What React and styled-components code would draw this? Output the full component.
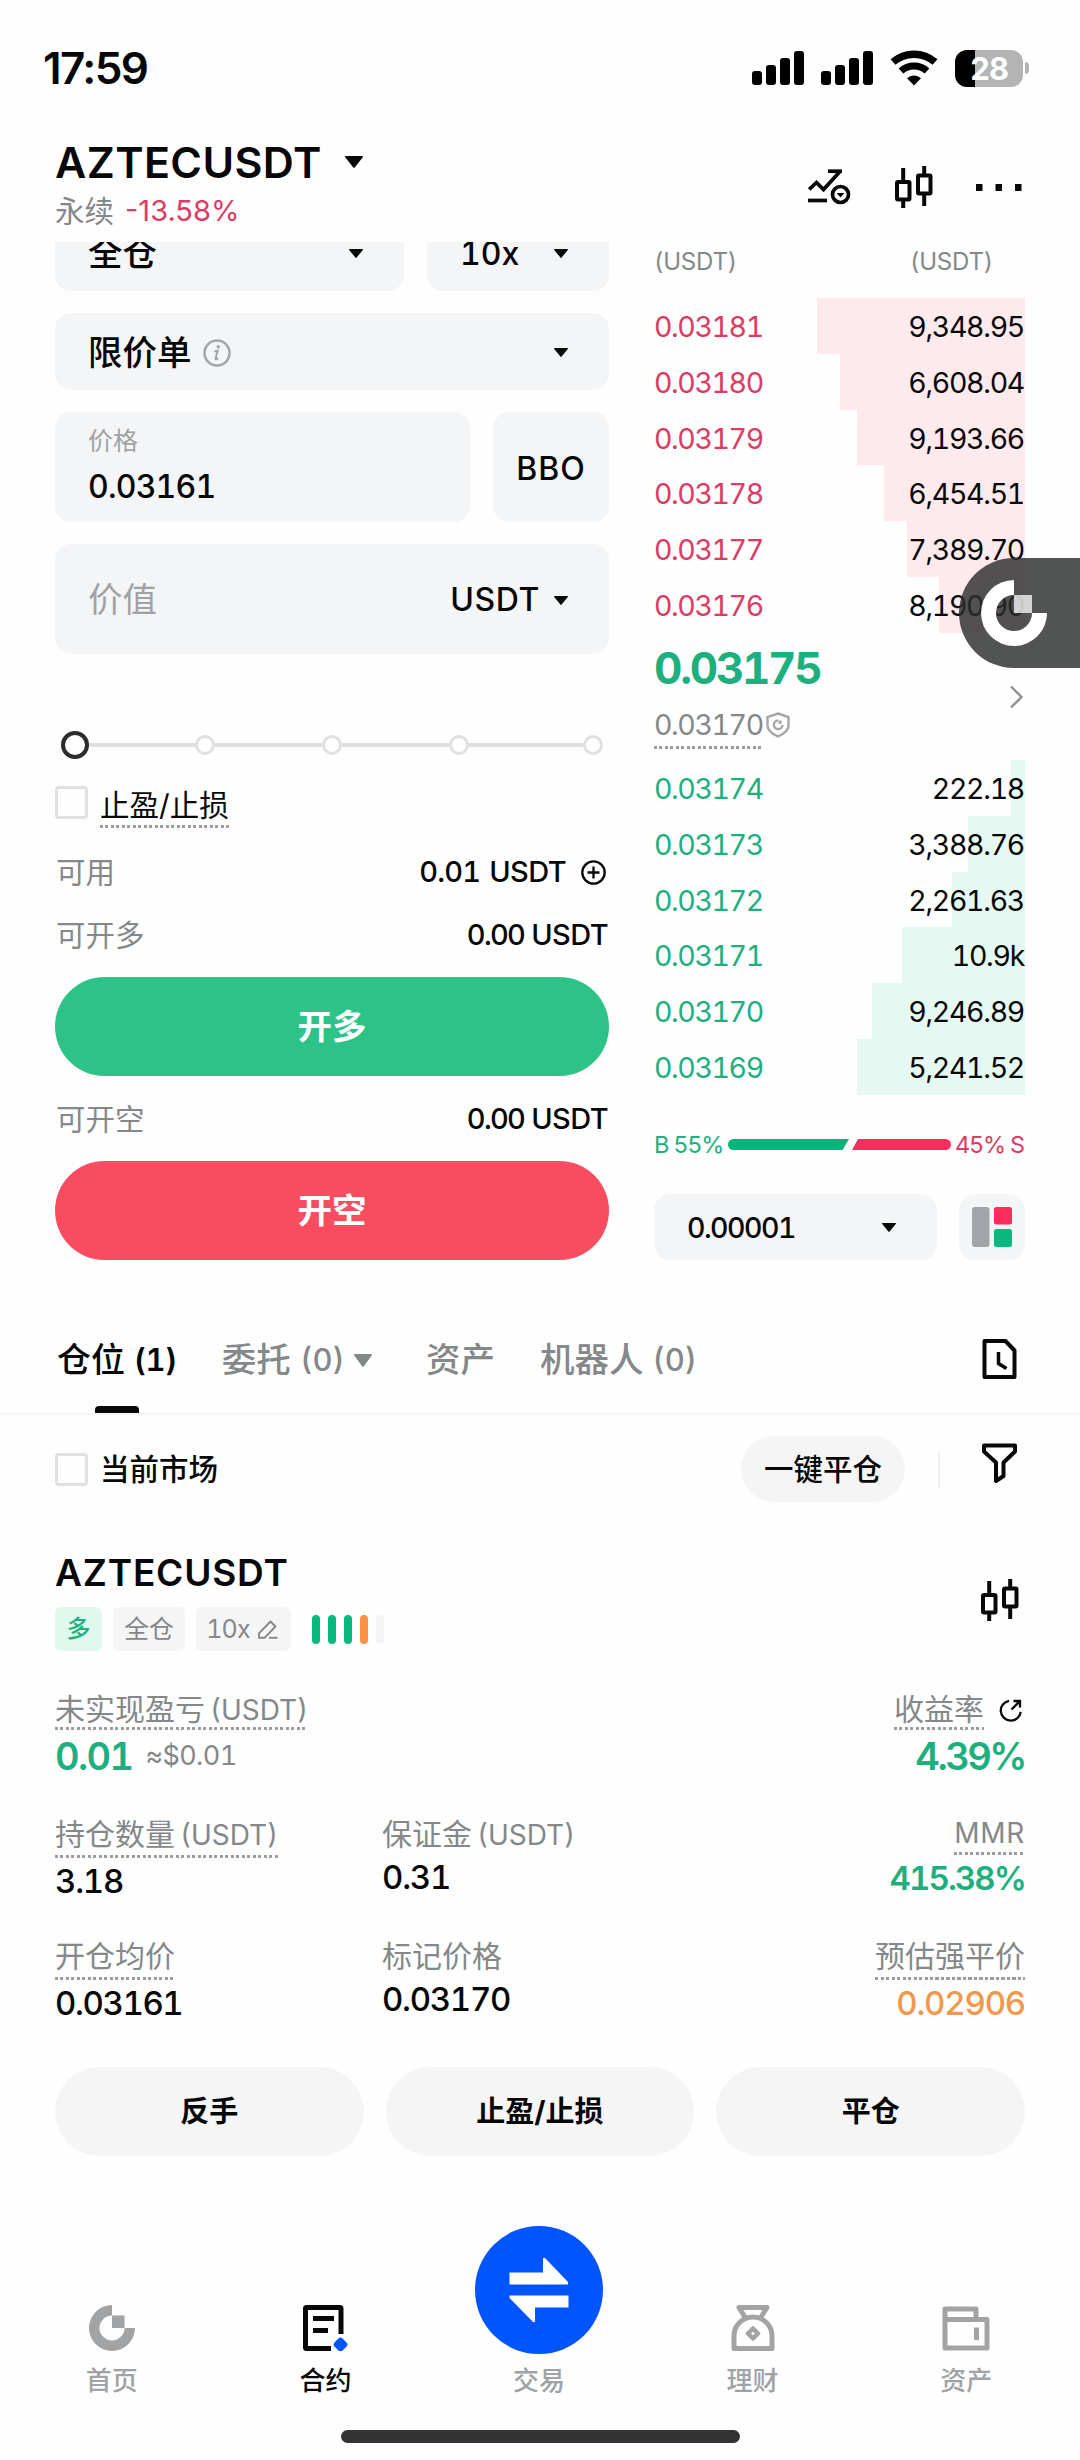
import React from "react";
import styled, { createGlobalStyle } from "styled-components";

const GlobalStyle = createGlobalStyle`
  * {
    box-sizing: border-box;
  }

  body {
    margin: 0;
    background-color: #fefefe;
    color: #070808;
    font-family: Inter, "Noto Sans CJK SC", sans-serif;
    font-variant-numeric: tabular-nums;
  }

  svg {
    display: block;
    flex-shrink: 0;
  }
`;

const Screen = styled.div`
  position: relative;
  width: 1080px;
  height: 2460px;
  overflow: hidden;
  display: flex;
  flex-direction: column;
`;

const Text = styled.span`
  font-size: ${(p) => p.$size || 29}px;
  font-weight: ${(p) => p.$weight || 400};
  font-variant-numeric: ${(p) => (p.$narrow ? "proportional-nums" : "tabular-nums")};
  letter-spacing: ${(p) => p.$spacing || 0}px;
  color: ${(p) => p.$color || "#070808"};
  line-height: ${(p) => p.$line || 40}px;
  white-space: nowrap;
`;

/* ---------- status bar ---------- */

const StatusBar = styled.div`
  height: 136px;
  padding: 0 51px 0 43px;
  display: flex;
  align-items: center;
  justify-content: space-between;
`;

const StatusIcons = styled.div`
  display: flex;
  align-items: center;
`;

const Signal = styled.div`
  display: flex;
  align-items: flex-end;
  gap: 4px;
  margin-right: 17px;

  i {
    width: 10px;
    border-radius: 3px;
    background-color: #000;
  }
  i:nth-child(1) { height: 14px; }
  i:nth-child(2) { height: 20px; }
  i:nth-child(3) { height: 27px; }
  i:nth-child(4) { height: 34px; }
`;

const Battery = styled.div`
  width: 68px;
  height: 37px;
  margin: 0 2px 0 17px;
  border-radius: 12px;
  background: linear-gradient(to right, #000 20px, #b4b4b4 20px);
  display: flex;
  align-items: center;
  justify-content: center;
  color: #fff;
  font-size: 31px;
  font-weight: 700;
  line-height: 37px;
  letter-spacing: -1px;
`;

const BatteryTip = styled.div`
  width: 4px;
  height: 12px;
  border-radius: 0 4px 4px 0;
  background-color: #b4b4b4;
`;

/* ---------- header ---------- */

const Header = styled.div`
  height: 106px;
  padding: 0 58px 0 55px;
  display: flex;
  justify-content: space-between;
`;

const Symbol = styled.div`
  display: flex;
  align-items: center;
  gap: 23px;
  height: 52px;
`;

const Change = styled.div`
  display: flex;
  align-items: center;
  gap: 11px;
  height: 46px;
`;

const HeaderIcons = styled.div`
  height: 102px;
  display: flex;
  align-items: center;
  gap: 43.5px;
`;

/* ---------- trade area ---------- */

const Trade = styled.div`
  height: 1018px;
  padding: 0 55px;
  overflow: hidden;
  display: flex;
  justify-content: space-between;
`;

// scrolled a little, so its first row goes under the header
const Form = styled.div`
  width: 554px;
  margin-top: -28px;
  display: flex;
  flex-direction: column;
`;

const FieldRow = styled.div`
  display: flex;
  gap: 23px;
  margin-bottom: 22px;
`;

const Field = styled.div`
  width: ${(p) => p.$width || "100%"};
  height: ${(p) => p.$height || 77}px;
  padding: 2px 41px 0 33px;
  border-radius: 16px;
  background-color: #f4f5f7;
  display: flex;
  align-items: center;
  justify-content: space-between;
`;

const PriceField = styled(Field)`
  flex-direction: column;
  align-items: flex-start;
  justify-content: flex-start;
  padding-top: 9px;
  gap: 6px;
`;

const BboButton = styled(Field)`
  padding: 3px 0 0;
  justify-content: center;
`;

const Inline = styled.div`
  display: flex;
  align-items: center;
  gap: ${(p) => p.$gap}px;
`;

const Slider = styled.div`
  height: 28px;
  margin: 55px 6px 0;
  display: flex;
  align-items: center;
`;

const Handle = styled.div`
  width: 28px;
  height: 28px;
  border: 4px solid #2b2c2d;
  border-radius: 50%;
`;

const Track = styled.div`
  width: ${(p) => p.$width}px;
  height: 4px;
  background-color: #dfdfdf;
`;

const Stop = styled.div`
  width: 20px;
  height: 20px;
  border: 3px solid #e0e0e0;
  border-radius: 50%;
`;

const CheckRow = styled.div`
  display: flex;
  gap: 12px;
  margin-top: 25px;
`;

const Checkbox = styled.div`
  width: 33px;
  height: 33px;
  margin-top: ${(p) => p.$offset || 0}px;
  border: 3px solid #dfe0e0;
  border-radius: 4px;
`;

const Underlined = styled.div`
  display: flex;
  align-items: baseline;
  gap: 5px;
  padding-bottom: ${(p) => (p.$tight ? 2 : 4)}px;
  background: repeating-linear-gradient(to right, #9b9d9f 0 3px, transparent 3px 5.5px) bottom / 100% 3px no-repeat;
`;

const InfoRow = styled.div`
  height: 40px;
  margin-top: ${(p) => p.$top}px;
  padding: 0 ${(p) => p.$right || 1}px 0 1px;
  display: flex;
  align-items: center;
  justify-content: space-between;
`;

const OrderButton = styled.div`
  height: 99px;
  margin-top: ${(p) => p.$top}px;
  border-radius: 50px;
  background-color: ${(p) => p.$bg};
  display: flex;
  align-items: center;
  justify-content: center;
`;

/* ---------- order book ---------- */

const Book = styled.div`
  width: 371px;
  display: flex;
  flex-direction: column;
`;

const BookHead = styled.div`
  height: 56px;
  display: grid;
  grid-template-columns: 256px auto;
`;

const BookRow = styled.div`
  height: 55.75px;
  padding: 2.5px 1px 0 0;
  display: flex;
  align-items: center;
  justify-content: space-between;
  background: linear-gradient(${(p) => p.$tint}, ${(p) => p.$tint}) right / ${(p) => p.$depth}px 100% no-repeat;
`;

const LastPrice = styled.div`
  height: 127.5px;
  padding: 6px 2px 0 0;
  display: flex;
  justify-content: space-between;

  > svg {
    margin-top: 46px;
  }
`;

const Mark = styled.div`
  display: flex;
  gap: 3px;
  margin-top: 7px;

  svg {
    margin-top: 8px;
  }
`;

const Ratio = styled.div`
  height: 30px;
  margin-top: 35px;
  padding-right: 1px;
  display: flex;
  align-items: center;
  justify-content: space-between;
`;

const BookTools = styled.div`
  margin-top: 34px;
  display: flex;
  justify-content: space-between;
`;

const LayoutButton = styled.div`
  width: 66px;
  height: 66px;
  border-radius: 16px;
  background-color: #f4f5f7;
  display: flex;
  align-items: center;
  justify-content: center;
`;

/* ---------- tabs ---------- */

const Tabs = styled.div`
  height: 155px;
  padding: 75px 63px 0 57px;
  border-bottom: 2px solid #f5f5f6;
  display: flex;
  align-items: flex-start;
  justify-content: space-between;
`;

const TabList = styled.div`
  display: flex;
  gap: 45px;
`;

const Tab = styled.div`
  display: flex;
  flex-direction: column;
  align-items: center;
`;

const TabMark = styled.div`
  width: 44px;
  height: 7px;
  margin-top: 21px;
  border-radius: 4px 4px 0 0;
  background-color: #070808;
`;

const TabLabel = styled.div`
  height: 50px;
  margin-right: ${(p) => p.$after || 0}px;
  display: flex;
  align-items: center;
`;

const TabTool = styled.div`
  padding-top: 4px;
`;

const Filters = styled.div`
  height: 66px;
  margin-top: 21px;
  padding: 0 63px 0 55px;
  display: flex;
  align-items: center;
  justify-content: space-between;

  svg {
    margin-bottom: 13px;
  }
`;

const CloseAll = styled.div`
  width: 164px;
  height: 66px;
  border-radius: 33px;
  background-color: #f5f5f5;
  display: flex;
  align-items: center;
  justify-content: center;
`;

const Divider = styled.div`
  width: 2px;
  height: 36px;
  margin: 0 42px 0 33px;
  background-color: #f0f0f0;
`;

/* ---------- position card ---------- */

const Position = styled.div`
  margin-top: 47px;
  padding: 0 55px;
`;

const PositionHead = styled.div`
  height: 102px;
  padding-right: 6px;
  display: flex;
  align-items: center;
  justify-content: space-between;
`;

const PositionTitle = styled.div`
  height: 58px;
  display: flex;
`;

const Tags = styled.div`
  display: flex;
  align-items: center;
  gap: 11px;
`;

const Tag = styled.div`
  width: ${(p) => p.$width}px;
  height: 44px;
  border-radius: 6px;
  background-color: ${(p) => p.$bg || "#f5f5f6"};
  display: flex;
  align-items: center;
  justify-content: center;
  gap: 8px;
`;

const LeverageTag = styled(Tag)`
  padding-right: 3px;
`;

const Risk = styled.div`
  display: flex;
  gap: 8px;
  margin-left: 10px;
`;

const RiskBar = styled.div`
  width: 8px;
  height: 29px;
  border-radius: 4px;
  background-color: ${(p) => p.$color};
`;

const Metrics = styled.div`
  height: ${(p) => p.$height}px;
  margin-top: ${(p) => p.$top}px;
  display: grid;
  grid-template-columns: 327px 1fr auto;
  align-items: start;
`;

const Metric = styled.div`
  display: flex;
  flex-direction: column;
  align-items: ${(p) => (p.$right ? "flex-end" : "flex-start")};
  gap: 3px;
`;

const Label = styled.div`
  display: flex;
  align-items: baseline;
  gap: 5px;
`;

const LabelWithIcon = styled.div`
  display: flex;
  align-items: center;
  gap: 15px;
  padding-right: 3px;
`;

const Actions = styled.div`
  margin-top: 44px;
  display: grid;
  grid-template-columns: repeat(3, 1fr);
  gap: 22px;
`;

const Action = styled.div`
  height: 89px;
  border-radius: 45px;
  background-color: #f5f5f5;
  display: flex;
  align-items: center;
  justify-content: center;
`;

/* ---------- bottom navigation ---------- */

const Nav = styled.div`
  height: 172px;
  margin-top: 70px;
  padding: 0 7px 0 5px;
  display: grid;
  grid-template-columns: repeat(5, 1fr);
`;

const NavItem = styled.div`
  display: flex;
  flex-direction: column;
  align-items: center;
  justify-content: flex-end;
`;

const NavIcon = styled.div`
  height: 46px;
  margin-bottom: 10px;
  display: flex;
  align-items: center;
`;

const TradeButton = styled.div`
  width: 128px;
  height: 128px;
  margin-bottom: 7px;
  border-radius: 50%;
  background-color: #0055ff;
  display: flex;
  align-items: center;
  justify-content: center;
`;

const HomeBar = styled.div`
  width: 399px;
  height: 13px;
  margin: 32px auto 0;
  border-radius: 7px;
  background-color: #333;
`;

// floats over the order book, glued to the right edge
const FloatingLogo = styled.div`
  position: absolute;
  top: 558px;
  right: 0;
  width: 121px;
  height: 110px;
  padding-left: 22px;
  border-radius: 55px 0 0 55px;
  background-color: rgba(42, 44, 44, 0.81);
  display: flex;
  align-items: center;
`;

/* ---------- icons ---------- */

const Caret = ({ width = 14, height = 9, color = "#070808" }) => (
  <svg width={width} height={height} viewBox="0 0 14 9" preserveAspectRatio="none">
    <path d="M0.6 0h12.8c.6 0 .8.6.4 1L7.6 8.6c-.3.4-.9.4-1.2 0L.2 1C-.2.6 0 0 .6 0z" fill={color} />
  </svg>
);

const Wifi = () => (
  <svg width="48" height="36" viewBox="0 0 48 36">
    <path d="M3 12C15 1.500 33 1.500 45 12" fill="none" stroke="#000" strokeWidth="7.500" />
    <path d="M11 21C18.500 14.300 29.500 14.300 37 21" fill="none" stroke="#000" strokeWidth="7" />
    <path d="M24 35.500l-7-7.200c3.900-3.900 10.100-3.900 14 0z" fill="#000" />
  </svg>
);

const ChartIcon = () => (
  <svg width="43" height="36" viewBox="0 0 43 36" fill="none" stroke="#070808" strokeWidth="3.700">
    <path d="M1.200 20.500l7.300-7 7 7L31.500 3" />
    <path d="M20 2.200h14" />
    <path d="M0 31.500h19" />
    <circle cx="32.500" cy="25.500" r="8" />
    <path d="M28.500 24h8l-4 4.500z" fill="#070808" stroke="none" />
  </svg>
);

const Candles = () => (
  <svg width="38" height="42" viewBox="0 0 38 42" fill="none" stroke="#070808" strokeWidth="4">
    <rect x="2" y="16" width="12.500" height="17.500" rx="1" />
    <path d="M8.200 2v13M8.200 34v8" />
    <rect x="23" y="9.500" width="12.500" height="18" rx="1" />
    <path d="M29.200 0v9M29.200 28v12" />
  </svg>
);

const Dots = () => (
  <svg width="46" height="7" viewBox="0 0 46 7" fill="#070808">
    <path d="M0 0h6.500v7H0zM19.500 0h6.500v7h-6.500zM39 0h6.500v7H39z" />
  </svg>
);

const Info = () => (
  <svg width="28" height="28" viewBox="0 0 28 28">
    <circle cx="14" cy="14" r="12.500" fill="none" stroke="#a3a5a8" strokeWidth="2.500" />
    <circle cx="15.300" cy="7.800" r="1.700" fill="#a3a5a8" />
    <path d="M11.300 12.500l3.400-.7-2.200 7.700c-.3 1.100.9 1.200 2.600-.5" fill="none" stroke="#a3a5a8" strokeWidth="2" />
  </svg>
);

const Plus = () => (
  <svg width="25" height="25" viewBox="0 0 25 25" fill="none" stroke="#070808" strokeWidth="2.300">
    <circle cx="12.500" cy="12.500" r="11.200" />
    <path d="M12.500 6.500v12M6.500 12.500h12" />
  </svg>
);

const Shield = () => (
  <svg width="24" height="26" viewBox="0 0 24 26" fill="none" stroke="#a3a5a8" strokeWidth="2.400">
    <path d="M12 1.500l10.500 3.500v8.500c0 5.500-5 8.500-10.500 11-5.500-2.500-10.500-5.500-10.500-11V5z" />
    <path d="M12 8.500a4.300 4.300 0 1 0 4.500 4.500" />
    <path d="M12.500 8.500h3v3.500h-3z" fill="#a3a5a8" stroke="none" />
  </svg>
);

const Chevron = () => (
  <svg width="13" height="24" viewBox="0 0 13 24" fill="none" stroke="#8f9193" strokeWidth="2.400">
    <path d="M1 1.500l10.500 10.500L1 22.500" />
  </svg>
);

const RatioBar = () => (
  <svg width="223" height="11" viewBox="0 0 223 11">
    <path d="M5.500 0H121l-6.500 11h-109a5.500 5.500 0 0 1 0-11z" fill="#06b37b" />
    <path d="M130 0h87.500a5.500 5.500 0 0 1 0 11H124z" fill="#fb2d5c" />
  </svg>
);

const LayoutIcon = () => (
  <svg width="40" height="40" viewBox="0 0 40 40">
    <rect width="17.500" height="40" rx="3" fill="#a1a4a8" />
    <rect x="22" width="18" height="17.500" rx="2.500" fill="#fb2d5c" />
    <rect x="22" y="22" width="18" height="18" rx="2.500" fill="#06b97c" />
  </svg>
);

const HistoryDoc = () => (
  <svg width="35" height="40" viewBox="0 0 35 40" fill="none" stroke="#070808" strokeWidth="4">
    <path d="M2.500 2h21l9 9.500V38h-30z" strokeLinejoin="round" />
    <path d="M16.500 13v11.500l8 5" strokeWidth="3.500" />
  </svg>
);

const Funnel = () => (
  <svg width="35" height="40" viewBox="0 0 35 40" fill="none" stroke="#070808" strokeWidth="4" strokeLinejoin="round">
    <path d="M2 2.500h31v6L21.500 19.500v13.500l-7.500 5V19.500L2 8.500z" />
  </svg>
);

const Pencil = () => (
  <svg width="20" height="19" viewBox="0 0 20 19" fill="none" stroke="#858889" strokeWidth="1.900">
    <path d="M1 17.800v-4.500L12.500 1.500l5 5L6.500 17.800z" strokeLinejoin="round" />
    <path d="M11 17.800h8.500" />
  </svg>
);

const ShareRing = () => (
  <svg width="23" height="23" viewBox="0 0 23 23" fill="none" stroke="#070808" strokeWidth="2.300">
    <path d="M10 1.800a10 10 0 1 0 11.700 11" />
    <path d="M12.500 10.500l8-8M14.500 2h6.500v6.500" />
  </svg>
);

const RingLogo = ({ size, color, squareOpacity = 1 }) => (
  <svg width={size} height={size} viewBox="0 0 66 66" fill={color}>
    <path d="M33 0a33 33 0 1 0 33 33H51a18 18 0 1 1-18-18z" />
    <path d="M33 15h18v18H33z" opacity={squareOpacity} />
  </svg>
);

const ContractIcon = () => (
  <svg width="46" height="46" viewBox="0 0 46 46" fill="none" stroke="#070808" strokeWidth="5">
    <path d="M29 43.500H4.500a1 1 0 0 1-1-1V3.500a1 1 0 0 1 1-1H38a1 1 0 0 1 1 1V29" />
    <path d="M11 13.500h21M11 25.500h15" />
    <path d="M38.500 36l3.500 3.500-3.500 3.500-3.500-3.500z" fill="#0055ff" stroke="#0055ff" strokeWidth="6.500" strokeLinejoin="round" />
  </svg>
);

const SwapIcon = () => (
  <svg width="60" height="66" viewBox="0 0 60 66" fill="#fff">
    <path d="M.5 15.500H34V1.500q1-1.500 2.500 0L59 25v2.500H.5z" />
    <path d="M59.500 50.500H26V64.500q-1 1.500-2.500 0L.5 41v-2.500h59z" />
  </svg>
);

const MoneyBag = () => (
  <svg width="44" height="46" viewBox="0 0 44 46" fill="none" stroke="#a1a3a5" strokeWidth="5" strokeLinejoin="round">
    <path d="M14.500 13L8 2.500h28L29.500 13" />
    <path d="M3 43.500V31a19 19 0 0 1 38 0v12.500z" />
    <path d="M22 23.500l5 5-5 5-5-5z" strokeWidth="4.500" />
  </svg>
);

const WalletIcon = () => (
  <svg width="48" height="46" viewBox="0 0 48 46" fill="none" stroke="#a1a3a5" strokeWidth="5" strokeLinejoin="round">
    <path d="M3 14V4h31v10" />
    <path d="M3 14.500h42V43H3z" />
    <path d="M34.500 22.500v12.500" />
  </svg>
);

/* ---------- data ---------- */

const gray = "#858889";
const lightGray = "#a0a3a5";
const green = "#1db07e";
const red = "#dc3b63";

const asks = [
  ["0.03181", "9,348.95", 208],
  ["0.03180", "6,608.04", 185],
  ["0.03179", "9,193.66", 168],
  ["0.03178", "6,454.51", 141],
  ["0.03177", "7,389.70", 118],
  ["0.03176", "8,190.90", 86],
];

const bids = [
  ["0.03174", "222.18", 14],
  ["0.03173", "3,388.76", 57],
  ["0.03172", "2,261.63", 73],
  ["0.03171", "10.9k", 123],
  ["0.03170", "9,246.89", 153],
  ["0.03169", "5,241.52", 168],
];

const BookRows = ({ rows, color, tint }) =>
  rows.map(([price, amount, depth]) => (
    <BookRow key={price} $depth={depth} $tint={tint}>
      <Text $size={28.5} $spacing={-1.4} $color={color}>{price}</Text>
      <Text $size={28.5} $spacing={-1.3}>{amount}</Text>
    </BookRow>
  ));

const Unit = () => <Text $size={28} $line={34} $color={gray}>(USDT)</Text>;

const OpenLimit = ({ label }) => (
  <InfoRow $top={23}>
    <Text $size={29.5} $color={gray}>{label}</Text>
    <Inline $gap={7}>
      <Text $weight={500} $spacing={-1.7}>0.00</Text>
      <Text $weight={500} $spacing={-0.6}>USDT</Text>
    </Inline>
  </InfoRow>
);

const App = () => {
  return (
    <>
      <GlobalStyle />
      <Screen>
        <StatusBar>
          <Text $size={44} $weight={600} $spacing={-1.6} $narrow>17:59</Text>
          <StatusIcons>
            <Signal><i /><i /><i /><i /></Signal>
            <Signal><i /><i /><i /><i /></Signal>
            <Wifi />
            <Battery>28</Battery>
            <BatteryTip />
          </StatusIcons>
        </StatusBar>

        <Header>
          <div>
            <Symbol>
              <Text $size={43} $weight={600} $spacing={0.4}>AZTECUSDT</Text>
              <Caret width={18} height={12} />
            </Symbol>
            <Change>
              <Text $size={29.5} $color={gray}>永续</Text>
              <Text $narrow $color={red}>-13.58%</Text>
            </Change>
          </div>
          <HeaderIcons>
            <ChartIcon />
            <Candles />
            <Dots />
          </HeaderIcons>
        </Header>

        <Trade>
          <Form>
            <FieldRow>
              <Field $width="349px">
                <Text $size={34.5} $weight={500}>全仓</Text>
                <Caret />
              </Field>
              <Field $width="182px">
                <Text $size={32} $weight={500}>10x</Text>
                <Caret />
              </Field>
            </FieldRow>
            <FieldRow>
              <Field>
                <Inline $gap={11}>
                  <Text $size={34.5} $weight={500}>限价单</Text>
                  <Info />
                </Inline>
                <Caret />
              </Field>
            </FieldRow>
            <FieldRow>
              <PriceField $width="415px" $height={110}>
                <Text $size={25} $color={lightGray}>价格</Text>
                <Text $size={32} $weight={500} $spacing={-0.8}>0.03161</Text>
              </PriceField>
              <BboButton $width="116px" $height={110}>
                <Text $size={32} $weight={500} $spacing={1}>BBO</Text>
              </BboButton>
            </FieldRow>
            <FieldRow>
              <Field $height={110}>
                <Text $size={34.5} $color={lightGray}>价值</Text>
                <Inline $gap={14}>
                  <Text $size={32} $weight={500} $spacing={0.6}>USDT</Text>
                  <Caret />
                </Inline>
              </Field>
            </FieldRow>

            <Slider>
              <Handle />
              <Track $width={106} />
              <Stop />
              <Track $width={107} />
              <Stop />
              <Track $width={107} />
              <Stop />
              <Track $width={114} />
              <Stop />
            </Slider>

            <CheckRow>
              <Checkbox $offset={2} />
              <Underlined $tight>
                <Text $size={29.5} $line={42}>止盈/止损</Text>
              </Underlined>
            </CheckRow>

            <InfoRow $top={24} $right={3}>
              <Text $size={29.5} $color={gray}>可用</Text>
              <Inline $gap={15}>
                <Inline $gap={9}>
                  <Text $weight={500} $spacing={-0.8}>0.01</Text>
                  <Text $weight={500} $spacing={-0.6}>USDT</Text>
                </Inline>
                <Plus />
              </Inline>
            </InfoRow>
            <OpenLimit label="可开多" />
            <OrderButton $top={22} $bg="#2cc288">
              <Text $size={34.5} $weight={700} $color="#fff">开多</Text>
            </OrderButton>
            <OpenLimit label="可开空" />
            <OrderButton $top={22} $bg="#f84c60">
              <Text $size={34.5} $weight={700} $color="#fff">开空</Text>
            </OrderButton>
          </Form>

          <Book>
            <BookHead>
              <Text $size={24} $spacing={-0.2} $color={gray}>(USDT)</Text>
              <Text $size={24} $spacing={-0.2} $color={gray}>(USDT)</Text>
            </BookHead>
            <BookRows rows={asks} color={red} tint="#fee9ed" />
            <LastPrice>
              <div>
                <Text as="div" $size={44} $weight={700} $spacing={-2.3} $line={58} $color={green}>0.03175</Text>
                <Mark>
                  <Underlined>
                    <Text $size={28.5} $spacing={-1.4} $line={41} $color={gray}>0.03170</Text>
                  </Underlined>
                  <Shield />
                </Mark>
              </div>
              <Chevron />
            </LastPrice>
            <BookRows rows={bids} color={green} tint="#e5f8f1" />
            <Ratio>
              <Text $size={23.5} $spacing={-1.2} $color={green}>B 55%</Text>
              <RatioBar />
              <Text $size={23.5} $spacing={-1.2} $color={red}>45% S</Text>
            </Ratio>
            <BookTools>
              <Field $width="283px" $height={66}>
                <Text $size={28.5} $weight={500} $spacing={-1.5}>0.00001</Text>
                <Caret />
              </Field>
              <LayoutButton>
                <LayoutIcon />
              </LayoutButton>
            </BookTools>
          </Book>
        </Trade>

        <Tabs>
          <TabList>
            <Tab>
              <TabLabel>
                <Inline $gap={9}>
                  <Text $size={34} $weight={500}>仓位</Text>
                  <Text $size={31} $weight={600} $spacing={-0.5}>(1)</Text>
                </Inline>
              </TabLabel>
              <TabMark />
            </Tab>
            <TabLabel $after={9}>
              <Inline $gap={9.5}>
                <Text $size={34.5} $weight={500} $color={gray}>委托</Text>
                <Text $size={31} $weight={500} $color={gray}>(0)</Text>
                <Caret width={18} height={13} color={gray} />
              </Inline>
            </TabLabel>
            <TabLabel>
              <Text $size={34.5} $weight={500} $color={gray}>资产</Text>
            </TabLabel>
            <TabLabel>
              <Inline $gap={9}>
                <Text $size={34.5} $weight={500} $color={gray}>机器人</Text>
                <Text $size={31} $weight={500} $color={gray}>(0)</Text>
              </Inline>
            </TabLabel>
          </TabList>
          <TabTool>
            <HistoryDoc />
          </TabTool>
        </Tabs>

        <Filters>
          <Inline $gap={12}>
            <Checkbox />
            <Text $weight={500} $size={29.5}>当前市场</Text>
          </Inline>
          <Inline $gap={0}>
            <CloseAll>
              <Text $weight={500} $size={29.5}>一键平仓</Text>
            </CloseAll>
            <Divider />
            <Funnel />
          </Inline>
        </Filters>

        <Position>
          <PositionHead>
            <div>
              <PositionTitle>
                <Text $size={37} $weight={600} $spacing={0.8} $line={48}>AZTECUSDT</Text>
              </PositionTitle>
              <Tags>
                <Tag $width={47} $bg="#e1f8ef">
                  <Text $size={24} $weight={500} $color={green}>多</Text>
                </Tag>
                <Tag $width={72}>
                  <Text $size={25} $color={gray}>全仓</Text>
                </Tag>
                <LeverageTag $width={95}>
                  <Text $size={25} $spacing={-0.8} $color={gray}>10x</Text>
                  <Pencil />
                </LeverageTag>
                <Risk>
                  <RiskBar $color="#06b97c" />
                  <RiskBar $color="#06b97c" />
                  <RiskBar $color="#06b97c" />
                  <RiskBar $color="#fb9244" />
                  <RiskBar $color="#f5f5f5" />
                </Risk>
              </Tags>
            </div>
            <Candles />
          </PositionHead>

          <Metrics $top={39} $height={91}>
            <Metric>
              <Underlined $tight>
                <Text $size={30} $line={38} $color={gray}>未实现盈亏</Text>
                <Unit />
              </Underlined>
              <Inline $gap={13}>
                <Text $size={38} $weight={600} $spacing={-1.6} $line={46} $color={green}>0.01</Text>
                <Text $size={27} $spacing={-0.6} $color={gray}>≈$0.01</Text>
              </Inline>
            </Metric>
            <div />
            <Metric $right>
              <LabelWithIcon>
                <Underlined $tight>
                  <Text $size={30} $line={38} $color={gray}>收益率</Text>
                </Underlined>
                <ShareRing />
              </LabelWithIcon>
              <Text $size={38} $weight={600} $spacing={-2.5} $line={46} $color={green}>4.39%</Text>
            </Metric>
          </Metrics>

          <Metrics $top={33} $height={89}>
            <Metric>
              <Underlined>
                <Text $size={30} $color={gray}>持仓数量</Text>
                <Unit />
              </Underlined>
              <Text $size={33} $weight={500} $spacing={-1.2}>3.18</Text>
            </Metric>
            <Metric>
              <Label>
                <Text $size={30} $color={gray}>保证金</Text>
                <Unit />
              </Label>
              <Text $size={33} $weight={500} $spacing={-1.2}>0.31</Text>
            </Metric>
            <Metric $right>
              <Underlined $tight>
                <Text $size={28} $spacing={0.7} $line={39} $color={gray}>MMR</Text>
              </Underlined>
              <Text $size={33} $weight={600} $spacing={-1.9} $color={green}>415.38%</Text>
            </Metric>
          </Metrics>

          <Metrics $top={33} $height={87}>
            <Metric>
              <Underlined>
                <Text $size={30} $color={gray}>开仓均价</Text>
              </Underlined>
              <Text $size={33} $weight={500} $spacing={-1.4}>0.03161</Text>
            </Metric>
            <Metric>
              <Label>
                <Text $size={30} $color={gray}>标记价格</Text>
              </Label>
              <Text $size={33} $weight={500} $spacing={-1.3}>0.03170</Text>
            </Metric>
            <Metric $right>
              <Underlined>
                <Text $size={30} $color={gray}>预估强平价</Text>
              </Underlined>
              <Text $size={33} $weight={500} $spacing={-1.2} $color="#f0984f">0.02906</Text>
            </Metric>
          </Metrics>

          <Actions>
            <Action><Text $weight={700}>反手</Text></Action>
            <Action><Text $weight={700}>止盈/止损</Text></Action>
            <Action><Text $weight={700}>平仓</Text></Action>
          </Actions>
        </Position>

        <Nav>
          <NavItem>
            <NavIcon><RingLogo size={46} color="#a1a3a5" /></NavIcon>
            <Text $size={26} $weight={500} $color={lightGray}>首页</Text>
          </NavItem>
          <NavItem>
            <NavIcon><ContractIcon /></NavIcon>
            <Text $size={26} $weight={500}>合约</Text>
          </NavItem>
          <NavItem>
            <TradeButton><SwapIcon /></TradeButton>
            <Text $size={26} $weight={500} $color={lightGray}>交易</Text>
          </NavItem>
          <NavItem>
            <NavIcon><MoneyBag /></NavIcon>
            <Text $size={26} $weight={500} $color={lightGray}>理财</Text>
          </NavItem>
          <NavItem>
            <NavIcon><WalletIcon /></NavIcon>
            <Text $size={26} $weight={500} $color={lightGray}>资产</Text>
          </NavItem>
        </Nav>
        <HomeBar />

        <FloatingLogo>
          <RingLogo size={66} color="#fff" squareOpacity={0.75} />
        </FloatingLogo>
      </Screen>
    </>
  );
};

export default App;
